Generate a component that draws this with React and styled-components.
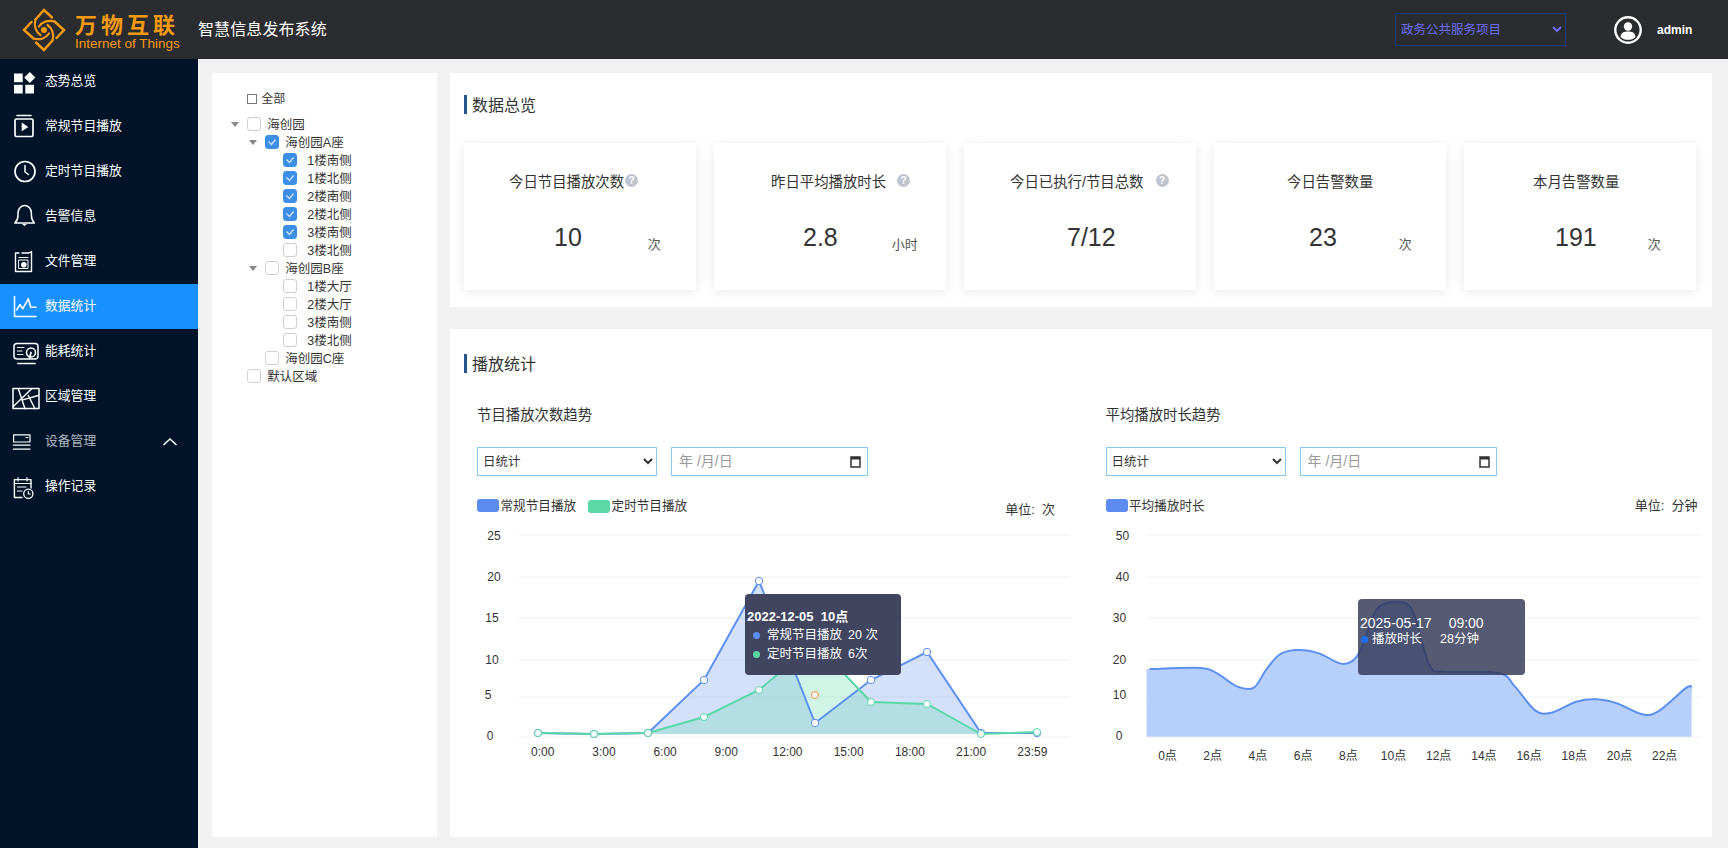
import React from "react";
import styled, { createGlobalStyle } from "styled-components";

const FONT = `"Liberation Sans", "Noto Sans CJK SC", sans-serif`;

const Global = createGlobalStyle`
  html, body { margin: 0; padding: 0; height: 100%; overflow: hidden; }
  body { font-family: ${FONT}; color: #333; background: #f2f2f2; }
  * { box-sizing: border-box; }
`;

const Page = styled.div`display: flex; flex-direction: column; height: 100vh;`;
const Header = styled.header`
  height: 59px; flex: none; background: #2b2c30; display: flex; align-items: center; padding-left: 22px; color: #fff;
`;
const LogoMark = styled.svg`width: 44px; height: 46px; flex: none; display: block;`;
const Brand = styled.div`margin-left: 9px; width: 112px; color: #f79a0e; display: flex; flex-direction: column;`;
const BrandName = styled.div`font-size: 22px; line-height: 22px; font-weight: 700; letter-spacing: 4px; margin-top: 7px; white-space: nowrap;`;
const BrandSub = styled.div`font-size: 13.5px; line-height: 14px; white-space: nowrap;`;
const SystemName = styled.div`font-size: 16px; line-height: 22px; margin-left: 11px; color: #fff; letter-spacing: 0.1px;`;
const ProjectSelect = styled.select`
  margin-left: auto; width: 171px; height: 33px; background: transparent; border: 1px solid #083a80; color: #6c6cf5;
  font: 12.5px ${FONT}; padding-left: 1px; outline: none; border-radius: 0;
`;
const User = styled.div`display: flex; align-items: center; margin-left: 47px; width: 115px;`;
const Avatar = styled.svg`width: 30px; height: 30px; display: block;`;
const UserName = styled.span`font-size: 12px; font-weight: 700; margin-left: 14px; color: #fff;`;

const Body = styled.div`flex: 1; display: flex; min-height: 0;`;
const Sidebar = styled.nav`width: 198px; flex: none; background: #001429;`;
const NavItem = styled.div`
  height: 45px; display: flex; align-items: center; padding-left: 11px; padding-right: 20px; gap: 6px;
  font-size: 12.8px; color: ${p => (p.$dim ? "rgba(255,255,255,.7)" : "#fff")}; background: ${p => (p.$active ? "#1890ff" : "transparent")};
`;
const NavLabel = styled.span`padding-bottom: 4px;`;
const NavSvg = styled.svg`width: 28px; height: 28px; flex: none; overflow: visible; display: block;`;
const NavChevron = styled.svg`width: 16px; height: 10px; margin-left: auto; display: block;`;

const Content = styled.main`flex: 1; min-width: 0; display: flex; gap: 13px; padding: 14px 16px 11px 14px;`;
const TreePanel = styled.aside`width: 225px; flex: none; background: #fff; padding: 17px 0 0 19px; font-size: 12.5px;`;
const AllRow = styled.div`display: flex; align-items: center; height: 18px; padding-left: 16.3px; margin-bottom: 7px; font-size: 12px;`;
const AllBox = styled.span`width: 10px; height: 10px; border: 1px solid #777; margin-right: 4px; flex: none;`;
const AllText = styled.span`padding-bottom: 3px;`;
const TreeRow = styled.div`display: flex; align-items: center; height: 18px; padding-left: ${p => p.$level * 18}px; white-space: nowrap;`;
const Caret = styled.span`
  width: 8px; height: 5px; flex: none; margin-right: 8.3px;
  ${p => (p.$show ? `border-left: 4px solid transparent; border-right: 4px solid transparent; border-top: 5px solid #888;` : "")}
`;
const Check = styled.span`
  width: 14px; height: 14px; border-radius: 3px; flex: none; display: flex; align-items: center; justify-content: center;
  border: 1px solid ${p => (p.$on ? "#3d8ee6" : "#d0d0d0")}; background: ${p => (p.$on ? "#3d8ee6" : "#fff")};
`;
const CheckMark = styled.svg`width: 10px; height: 10px; display: block;`;
const TreeText = styled.span`margin-left: ${p => (p.$level === 2 ? 10 : 6)}px; color: #333; padding-bottom: 1px;`;

const Right = styled.div`flex: 1; min-width: 0; display: flex; flex-direction: column; gap: 22px;`;
const Card = styled.section`background: #fff; padding: ${p => p.$pad}; ${p => (p.$grow ? "flex: 1;" : "")}`;
const SectionTitle = styled.h2`
  margin: 0; border-left: 3px solid #25558c; padding-left: 5px; font-size: 16px; font-weight: 400; height: 19px; line-height: 21px; color: #333;
`;
const StatRow = styled.div`display: flex; gap: 18px; margin-top: 29px;`;
const Stat = styled.div`
  flex: 1; height: 147px; background: #fff; box-shadow: 0 2px 12px rgba(0,0,0,.09); padding-top: 29px; min-width: 0;
`;
const StatLabel = styled.div`display: flex; align-items: center; height: 20px; font-size: 14.4px; padding-left: ${p => p.$x}px; white-space: nowrap;`;
const StatLabelText = styled.span`padding-bottom: 3px;`;
const Help = styled.span`
  width: 13px; height: 13px; border-radius: 50%; background: #c0c4cf; color: #fff; font-size: 10px; line-height: 13px; font-weight: 700;
  text-align: center; margin-left: ${p => p.$gap}px; margin-top: -4px; flex: none;
`;
const StatValue = styled.div`display: flex; margin-top: 30px; height: 30px; padding-left: ${p => p.$x}px;`;
const ValueNum = styled.span`font-size: 25px; line-height: 30px; color: #333;`;
const ValueUnit = styled.span`font-size: 13px; line-height: 16px; align-self: flex-end; margin-bottom: -1px; margin-left: ${p => p.$gap}px; color: #555;`;

const ChartGrid = styled.div`display: grid; grid-template-columns: 628.5px 1fr; margin-top: 32px; padding-left: 13px;`;
const ChartCol = styled.div`min-width: 0;`;
const ChartTitle = styled.div`font-size: 14.4px; line-height: 20px; color: #333;`;
const Filters = styled.div`display: flex; margin-top: 22px; gap: 14px;`;
const RangeSelect = styled.select`
  width: 180px; height: 29px; border: 1px solid #85cdf0; background: #fff; color: #333; font: 12.5px ${FONT}; padding-left: 1px; border-radius: 0; outline: none;
`;
const DateField = styled.div`
  width: 197px; height: 29px; border: 1px solid #85cdf0; display: flex; align-items: center; justify-content: space-between;
  padding: 0 6px 0 7px; color: #999; font-size: 14px;
`;
const DateText = styled.span`padding-bottom: 3px;`;
const CalIcon = styled.svg`width: 11px; height: 13px; display: block;`;
const LegendRow = styled.div`display: flex; align-items: center; margin: 18px 0 3px; height: 23px; font-size: 12.6px; width: ${p => p.$w}px;`;
const Swatch = styled.span`width: 22px; height: 13px; border-radius: 3px; background: ${p => p.$c}; margin-right: 1.5px; flex: none; margin-top: ${p => p.$top || 0}px;`;
const LegendText = styled.span`margin-right: 12px; margin-top: -2px; color: #333;`;
const UnitText = styled.span`margin-left: auto; font-size: 13px; color: #333; margin-top: ${p => p.$top}px; white-space: pre;`;
const ChartBox = styled.div`position: relative; height: 250px;`;
const ChartSvg = styled.svg`display: block; overflow: visible;`;
const Tip = styled.div`
  position: absolute; left: ${p => p.$x}px; top: ${p => p.$y}px; width: ${p => p.$w}px; height: ${p => p.$h}px;
  background: ${p => p.$bg}; border-radius: 4px; color: #fff; padding: ${p => p.$pt}px 0 0 2px; font-size: 12.5px; white-space: nowrap;
`;
const TipTitle = styled.div`line-height: ${p => p.$lh}px; font-size: ${p => p.$size}px; font-weight: ${p => p.$weight}; display: flex; gap: ${p => p.$gap}px;`;
const TipRow = styled.div`display: flex; align-items: center; line-height: ${p => p.$lh}px; padding-left: ${p => p.$pl}px;`;
const TipDot = styled.span`width: ${p => p.$s}px; height: ${p => p.$s}px; border-radius: 50%; background: ${p => p.$c}; margin-right: ${p => p.$mr}px; flex: none;`;
const TipValue = styled.span`margin-left: ${p => p.$gap}px;`;

const Ic = ({ children }) => (
  <NavSvg viewBox="0 0 28 28" fill="none" stroke="#fff" strokeWidth="1.5" strokeLinecap="round" strokeLinejoin="round">{children}</NavSvg>
);

const icons = {
  overview: (
    <Ic>
      <g fill="#fff" stroke="none">
        <rect x="3" y="5.5" width="8.7" height="8.7" />
        <path d="M18.8 4 L24.3 9.5 L18.8 15 L13.3 9.5 Z" />
        <rect x="3" y="16.8" width="8.7" height="8.7" />
        <rect x="14.3" y="16.8" width="8.7" height="8.7" />
      </g>
    </Ic>
  ),
  play: (
    <Ic>
      <rect x="4" y="6" width="18" height="17.5" rx="1.5" strokeWidth="1.7" />
      <path d="M6 2.6 H20" />
      <path d="M10.7 9.6 V18.2 L17.3 13.9 Z" fill="#fff" stroke="none" />
    </Ic>
  ),
  clock: (
    <Ic>
      <circle cx="14" cy="13.5" r="10" strokeWidth="1.7" />
      <path d="M14 7.5 V14 L17.5 16.5" />
    </Ic>
  ),
  bell: (
    <Ic>
      <path d="M3.8 20 C6 18 7 16 7 12.5 V10 a6.3 7 0 0 1 13.4 0 V12.5 C20.4 16 21.4 18 23.4 20 Z" />
      <path d="M11 21 H16 L13.5 23 Z" fill="#fff" stroke="none" />
    </Ic>
  ),
  file: (
    <Ic>
      <path d="M8 5 H4.5 V23.5 H20.5 V3.5 L18 5 H11" strokeWidth="1.4" />
      <path d="M8 9.5 H17" strokeWidth="1.2" />
      <path d="M8 12 H17 V20.5 H8 Z" strokeWidth="1" />
      <circle cx="12.8" cy="16.8" r="2.8" fill="#fff" stroke="none" />
    </Ic>
  ),
  chart: (
    <Ic>
      <path d="M3.5 3.5 V23.5 H25" strokeWidth="1.5" />
      <path d="M5.7 16.8 L9 11.5 L11.7 15.8 L17.3 5.8 L19.7 14.2 H25" strokeWidth="1.6" />
    </Ic>
  ),
  energy: (
    <Ic>
      <rect x="3" y="5.5" width="24" height="15.5" rx="3" />
      <path d="M7 25.5 H24" strokeWidth="1.7" />
      <path d="M6.5 9.5 H13 M6.5 13 H11 M6.5 16.5 H12" strokeWidth="1.2" />
      <circle cx="20" cy="14.5" r="4.5" />
      <path d="M20 14.5 L18.5 20" strokeWidth="1.8" />
    </Ic>
  ),
  map: (
    <Ic>
      <rect x="2" y="5.5" width="26" height="20" strokeWidth="1.5" />
      <path d="M7.3 5.8 L14 25.8 M20.7 5.8 L2.3 23.5 M11.7 16.8 L27.3 12.5 M17.3 12.5 L24 25.8" strokeWidth="1.4" />
    </Ic>
  ),
  device: (
    <Ic>
      <rect x="2.6" y="6.8" width="16.4" height="7.2" strokeWidth="1.2" />
      <path d="M15 9.5 H17" strokeWidth="1.2" />
      <path d="M2.4 17.2 H19 M2.4 21.2 H19" strokeWidth="1.3" />
    </Ic>
  ),
  log: (
    <Ic>
      <path d="M11 24.5 H3.4 V6.6 H20 V15" strokeWidth="1.4" />
      <path d="M7 4.6 V8 M16 4.6 V8 M3.4 10.5 H20 M6.5 14 H15 M6.5 18 H11" strokeWidth="1.2" />
      <circle cx="17.3" cy="20.8" r="4.6" fill="#001429" strokeWidth="1.3" />
      <path d="M17.3 18.4 V21 H19.3" strokeWidth="1.1" />
    </Ic>
  ),
};

const navItems = [
  ["overview", "态势总览"], ["play", "常规节目播放"], ["clock", "定时节目播放"], ["bell", "告警信息"], ["file", "文件管理"],
  ["chart", "数据统计", true], ["energy", "能耗统计"], ["map", "区域管理"], ["device", "设备管理", false, true], ["log", "操作记录"],
];

const tree = [
  [0, "海创园", true, false], [1, "海创园A座", true, true],
  [2, "1楼南侧", false, true], [2, "1楼北侧", false, true], [2, "2楼南侧", false, true], [2, "2楼北侧", false, true], [2, "3楼南侧", false, true], [2, "3楼北侧", false, false],
  [1, "海创园B座", true, false], [2, "1楼大厅", false, false], [2, "2楼大厅", false, false], [2, "3楼南侧", false, false], [2, "3楼北侧", false, false],
  [1, "海创园C座", false, false], [0, "默认区域", false, false],
];

const stats = [
  { label: "今日节目播放次数", lx: 45, help: 1, value: "10", vx: 90, unit: "次", ug: 66 },
  { label: "昨日平均播放时长", lx: 57, help: 11, value: "2.8", vx: 89, unit: "小时", ug: 54 },
  { label: "今日已执行/节目总数", lx: 46, help: 12, value: "7/12", vx: 103 },
  { label: "今日告警数量", lx: 73, value: "23", vx: 95, unit: "次", ug: 62 },
  { label: "本月告警数量", lx: 69, value: "191", vx: 91, unit: "次", ug: 51 },
];

const gridYs = [535, 577, 618, 660, 697, 737];

const blue = [[538,733],[594,734],[648,733],[704,680],[759,581],[815,723],[871,680],[927,652],[981,733],[1037,733]];
const green = [[538,733],[594,734],[648,733],[704,717],[759,690],[815,643],[871,702],[927,704],[981,734],[1037,732]];
const toLine = pts => pts.map((p, i) => `${i ? "L" : "M"}${p[0]} ${p[1]}`).join(" ");
const toArea = (pts, b) => `${toLine(pts)} L${pts[pts.length - 1][0]} ${b} L${pts[0][0]} ${b} Z`;

const curveRaw = [[145,837],[270,834],[310,850],[360,890],[400,893],[430,840],[465,792],[510,780],[560,790],[620,822],[660,785],[700,660],[750,635],[790,665],[830,825],[870,845],[1000,849],[1040,890],[1090,962],[1130,968],[1190,935],[1240,928],[1290,940],[1350,972],[1390,965],[1460,893],[1473,893]];
const curve = curveRaw.map(([x, y]) => [1090 + x / 2.45, 390 + y / 3]);
const smooth = pts => {
  let d = `M${pts[0][0]} ${pts[0][1]}`;
  for (let i = 0; i < pts.length - 1; i++) {
    const p0 = pts[i - 1] || pts[i], p1 = pts[i], p2 = pts[i + 1], p3 = pts[i + 2] || p2;
    d += ` C${p1[0] + (p2[0] - p0[0]) / 6} ${p1[1] + (p2[1] - p0[1]) / 6} ${p2[0] - (p3[0] - p1[0]) / 6} ${p2[1] - (p3[1] - p1[1]) / 6} ${p2[0]} ${p2[1]}`;
  }
  return d;
};
const curvePath = smooth(curve);

const AxisText = ({ x, y, children }) => (
  <text x={x} y={y} textAnchor="middle" dominantBaseline="central" fontSize="12" fill="#333" fontFamily={FONT}>{children}</text>
);

const CalGlyph = () => (
  <CalIcon viewBox="0 0 11 13">
    <path d="M1 2 H10 V12 H1 Z" fill="#fff" stroke="#333" strokeWidth="1.5" />
    <path d="M1 2 H10 V4.5 H1 Z" fill="#333" />
  </CalIcon>
);

const Controls = () => (
  <Filters>
    <RangeSelect defaultValue="d"><option value="d">日统计</option></RangeSelect>
    <DateField><DateText>年 /月/日</DateText><CalGlyph /></DateField>
  </Filters>
);

const LeftChart = () => (
  <ChartSvg width="620" height="250" viewBox="477 520 620 250">
    {gridYs.map(y => <line key={y} x1="518" x2="1071" y1={y} y2={y} stroke="#f0f0f0" />)}
    {[[494,536,"25"],[494,577,"20"],[492,618,"15"],[492,660,"10"],[488,695,"5"],[490,736,"0"]].map(([x,y,t]) => <AxisText key={t} x={x} y={y}>{t}</AxisText>)}
    {["0:00","3:00","6:00","9:00","12:00","15:00","18:00","21:00","23:59"].map((t, i) => <AxisText key={t} x={542.7 + i * 61.2} y={752}>{t}</AxisText>)}
    <path d={toArea(blue, 734)} fill="rgba(91,143,240,.27)" />
    <path d={toArea(green, 734)} fill="rgba(90,216,166,.27)" />
    <path d={toLine(blue)} fill="none" stroke="#5b8ff0" strokeWidth="2" />
    <path d={toLine(green)} fill="none" stroke="#5ad8a6" strokeWidth="2" />
    {blue.map(([x, y]) => <circle key={x} cx={x} cy={y} r="3.7" fill="#fff" stroke="#5b8ff0" />)}
    {green.map(([x, y]) => <circle key={x} cx={x} cy={y} r="3.5" fill="#fff" stroke="#5ad8a6" />)}
    <circle cx="815" cy="695" r="3.5" fill="#fff" stroke="#f6903d" />
  </ChartSvg>
);

const RightChart = () => (
  <ChartSvg width="610" height="250" viewBox="1105.5 520 610 250">
    {gridYs.map(y => <line key={y} x1="1146" x2="1701" y1={y} y2={y} stroke="#f0f0f0" />)}
    {[[1122,536,"50"],[1122,577,"40"],[1119,618,"30"],[1119,660,"20"],[1119,695,"10"],[1118.5,736,"0"]].map(([x,y,t]) => <AxisText key={t} x={x} y={y}>{t}</AxisText>)}
    {["0点","2点","4点","6点","8点","10点","12点","14点","16点","18点","20点","22点"].map((t, i) => <AxisText key={t} x={1167 + i * 45.2} y={756}>{t}</AxisText>)}
    <path d={`${curvePath} L1691 736.7 L1146 736.7 L1146 669 Z`} fill="#b7cffb" />
    <path d={curvePath} fill="none" stroke="#5b8ff0" strokeWidth="2" />
  </ChartSvg>
);

export default function App() {
  return (
    <Page>
      <Global />
      <Header>
        <LogoMark viewBox="-22 -23 44 46" fill="none" stroke="#f79a0e" strokeWidth="2.5" strokeLinejoin="miter" strokeLinecap="round">
          {[0, 90, 180, 270].map(r => (
            <g key={r} transform={`rotate(${r})`}>
              <path d="M-8.5 -10.5 L0 -20 L8 -12.5" />
              <path d="M-8.5 -10.5 C-10.5 -4 -8 2 -3.5 5" strokeWidth="2.2" />
            </g>
          ))}
          <circle cx="0" cy="0" r="3" fill="#f79a0e" stroke="none" />
        </LogoMark>
        <Brand>
          <BrandName>万物互联</BrandName>
          <BrandSub>Internet of Things</BrandSub>
        </Brand>
        <SystemName>智慧信息发布系统</SystemName>
        <ProjectSelect defaultValue="a"><option value="a">政务公共服务项目</option></ProjectSelect>
        <User>
          <Avatar viewBox="0 0 30 30">
            <circle cx="15" cy="15" r="12.7" fill="none" stroke="#fff" strokeWidth="2.4" />
            <circle cx="15" cy="11.5" r="4.2" fill="#fff" />
            <path d="M7.5 22 C8 17.5 11 16.5 15 16.5 C19 16.5 22 17.5 22.5 22 C20.5 24 18 24.8 15 24.8 C12 24.8 9.5 24 7.5 22 Z" fill="#fff" />
          </Avatar>
          <UserName>admin</UserName>
        </User>
      </Header>
      <Body>
        <Sidebar>
          {navItems.map(([k, t, active, dev]) => (
            <NavItem key={k} $active={active} $dim={dev}>
              {icons[k]}
              <NavLabel>{t}</NavLabel>
              {dev && (
                <NavChevron viewBox="0 0 16 10" fill="none" stroke="#fff" strokeWidth="1.6">
                  <path d="M1.5 8 L8 2 L14.5 8" />
                </NavChevron>
              )}
            </NavItem>
          ))}
        </Sidebar>
        <Content>
          <TreePanel>
            <AllRow><AllBox /><AllText>全部</AllText></AllRow>
            {tree.map(([lv, t, caret, on], i) => (
              <TreeRow key={i} $level={lv}>
                <Caret $show={caret} />
                <Check $on={on}>
                  {on && (
                    <CheckMark viewBox="0 0 10 10" fill="none" stroke="#cfe3fa" strokeWidth="1.3">
                      <path d="M1.5 4.5 L4.5 7.5 L8.5 2.5" />
                    </CheckMark>
                  )}
                </Check>
                <TreeText $level={lv}>{t}</TreeText>
              </TreeRow>
            ))}
          </TreePanel>
          <Right>
            <Card $pad="22px 16px 17px 14px">
              <SectionTitle>数据总览</SectionTitle>
              <StatRow>
                {stats.map(s => (
                  <Stat key={s.label}>
                    <StatLabel $x={s.lx}>
                      <StatLabelText>{s.label}</StatLabelText>
                      {s.help !== undefined && <Help $gap={s.help}>?</Help>}
                    </StatLabel>
                    <StatValue $x={s.vx}>
                      <ValueNum>{s.value}</ValueNum>
                      {s.unit && <ValueUnit $gap={s.ug}>{s.unit}</ValueUnit>}
                    </StatValue>
                  </Stat>
                ))}
              </StatRow>
            </Card>
            <Card $grow $pad="25px 0 0 14px">
              <SectionTitle>播放统计</SectionTitle>
              <ChartGrid>
                <ChartCol>
                  <ChartTitle>节目播放次数趋势</ChartTitle>
                  <Controls />
                  <LegendRow $w={578}>
                    <Swatch $c="#5b8bf0" />
                    <LegendText>常规节目播放</LegendText>
                    <Swatch $c="#5ad8a6" $top={1} />
                    <LegendText>定时节目播放</LegendText>
                    <UnitText $top={6}>{"单位:  次"}</UnitText>
                  </LegendRow>
                  <ChartBox>
                    <LeftChart />
                    <Tip $x={268} $y={74} $w={156} $h={81} $bg="#414560" $pt={14}>
                      <TipTitle $lh={18} $size={13} $weight={700} $gap={0}>2022-12-05&nbsp;&nbsp;10点</TipTitle>
                      <TipRow $lh={18} $pl={6}><TipDot $s={7} $c="#5b8ff0" $mr={7} />常规节目播放<TipValue $gap={6}>20 次</TipValue></TipRow>
                      <TipRow $lh={20} $pl={6}><TipDot $s={7} $c="#5ad8a6" $mr={7} />定时节目播放<TipValue $gap={6}>6次</TipValue></TipRow>
                    </Tip>
                  </ChartBox>
                </ChartCol>
                <ChartCol>
                  <ChartTitle>平均播放时长趋势</ChartTitle>
                  <Controls />
                  <LegendRow $w={592}>
                    <Swatch $c="#5b8bf0" />
                    <LegendText>平均播放时长</LegendText>
                    <UnitText $top={-2}>{"单位:  分钟"}</UnitText>
                  </LegendRow>
                  <ChartBox>
                    <RightChart />
                    <Tip $x={252.5} $y={79} $w={167} $h={76} $bg="rgba(50,54,84,.82)" $pt={16}>
                      <TipTitle $lh={16} $size={14} $weight={400} $gap={17}><span>2025-05-17</span><span>09:00</span></TipTitle>
                      <TipRow $lh={16} $pl={1}><TipDot $s={7} $c="#1e6ff5" $mr={4} />播放时长<TipValue $gap={18}>28分钟</TipValue></TipRow>
                    </Tip>
                  </ChartBox>
                </ChartCol>
              </ChartGrid>
            </Card>
          </Right>
        </Content>
      </Body>
    </Page>
  );
}
